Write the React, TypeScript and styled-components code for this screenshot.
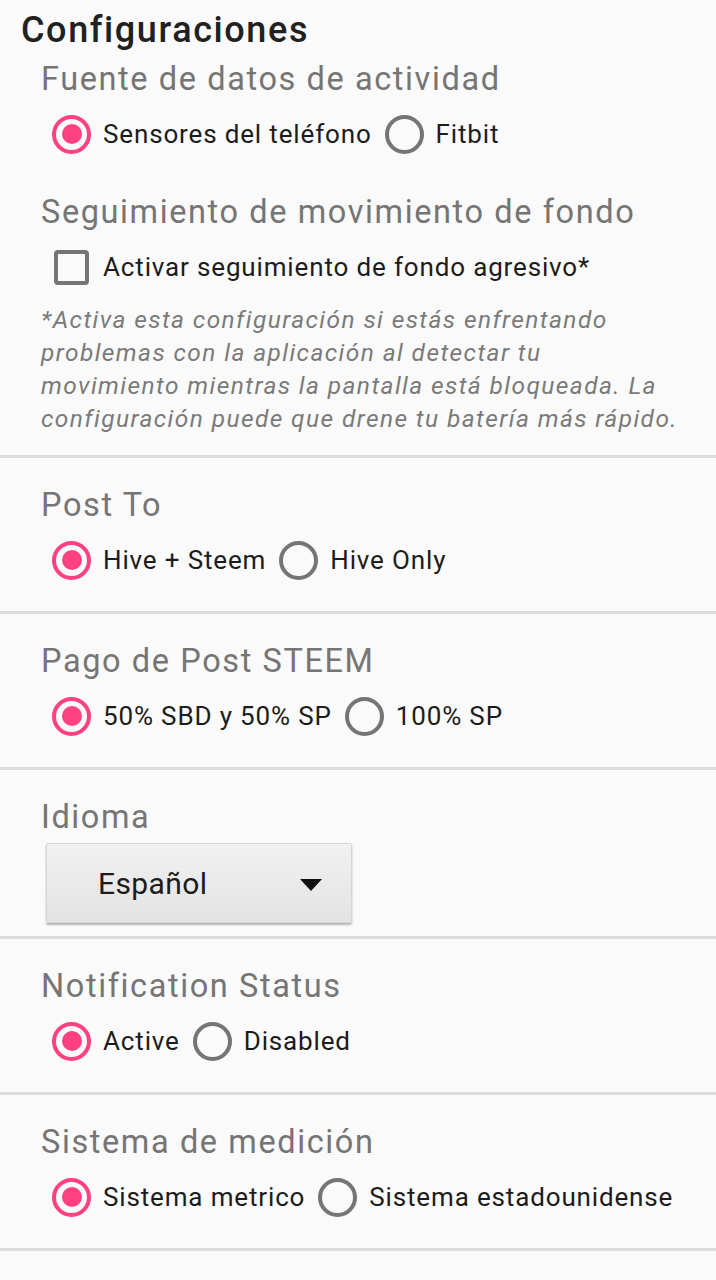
import React from "react";
import styled, { createGlobalStyle } from "styled-components";

const GlobalStyle = createGlobalStyle`
  html, body {
    margin: 0;
    padding: 0;
    background: #fafafa;
  }
  body {
    font-family: Roboto, "Noto Sans", "Liberation Sans", sans-serif;
    -webkit-font-smoothing: antialiased;
  }
`;

const Page = styled.div`
  width: 716px;
  min-height: 1280px;
  background: #fafafa;
  overflow: hidden;
`;

const Title = styled.h1`
  margin: 0;
  padding-left: 21px;
  height: 60px;
  line-height: 60px;
  font-size: 36px;
  font-weight: 500;
  letter-spacing: 1.6px;
  color: #212121;
`;

const Section = styled.section<{ $divider?: boolean; $bottom?: number }>`
  border-top: ${(p) => (p.$divider ? "3px solid #dcdcdc" : "none")};
  padding-bottom: ${(p) => p.$bottom ?? 15}px;
`;

const Header = styled.h2<{ $top?: number }>`
  margin: ${(p) => p.$top ?? 28}px 0 0 41px;
  height: 38px;
  line-height: 38px;
  font-size: 32.5px;
  font-weight: 400;
  letter-spacing: 1.6px;
  color: #757575;
  white-space: nowrap;
`;

const Row = styled.div<{ $h?: number }>`
  display: flex;
  align-items: center;
  gap: 13px;
  height: ${(p) => p.$h ?? 72}px;
  padding-left: 52px;
`;

const Option = styled.label`
  display: flex;
  align-items: center;
  gap: 12px;
  font-size: 26px;
  letter-spacing: 0.85px;
  color: #1c1c1c;
  white-space: nowrap;
`;

const RadioCircle = styled.span<{ $checked?: boolean }>`
  box-sizing: border-box;
  width: 39px;
  height: 39px;
  border-radius: 50%;
  border: 4.5px solid ${(p) => (p.$checked ? "#ff4081" : "#757575")};
  display: flex;
  align-items: center;
  justify-content: center;
  flex-shrink: 0;
  &::after {
    content: "";
    display: ${(p) => (p.$checked ? "block" : "none")};
    width: 20px;
    height: 20px;
    border-radius: 50%;
    background: #ff4081;
  }
`;

const CheckSlot = styled.span`
  width: 39px;
  height: 39px;
  display: flex;
  align-items: center;
  justify-content: center;
  flex-shrink: 0;
`;

const CheckBox = styled.span`
  box-sizing: border-box;
  width: 35px;
  height: 35px;
  border: 4px solid #757575;
  border-radius: 4px;
`;

const Note = styled.p`
  margin: 0 0 0 41px;
  padding-right: 30px;
  font-size: 24.5px;
  line-height: 33px;
  letter-spacing: 1.4px;
  font-style: italic;
  color: #7a7a7a;
`;

const Dropdown = styled.div`
  box-sizing: border-box;
  margin: 7px 0 0 46px;
  width: 306px;
  height: 80px;
  padding: 0 29px 0 51px;
  display: flex;
  align-items: center;
  justify-content: space-between;
  background: linear-gradient(#f1f1f1, #e3e3e3);
  border: 1px solid #d6d6d6;
  border-radius: 2px;
  box-shadow: 0 2px 2px rgba(0, 0, 0, 0.28);
  font-size: 30px;
  letter-spacing: 0.4px;
  color: #1c1c1c;
`;

const Caret = styled.span`
  width: 0;
  height: 0;
  border-left: 11.5px solid transparent;
  border-right: 11.5px solid transparent;
  border-top: 12px solid #111;
  margin-top: 4px;
`;

type Opt = { label: string; checked?: boolean };

const RadioGroup: React.FC<{ options: Opt[] }> = ({ options }) => (
  <Row>
    {options.map((o) => (
      <Option key={o.label}>
        <RadioCircle $checked={o.checked} />
        {o.label}
      </Option>
    ))}
  </Row>
);

export default function App() {
  return (
    <Page>
      <GlobalStyle />
      <Title>Configuraciones</Title>
      <Section $bottom={20}>
        <Header $top={0}>Fuente de datos de actividad</Header>
        <RadioGroup
          options={[
            { label: "Sensores del teléfono", checked: true },
            { label: "Fitbit" },
          ]}
        />
        <Header $top={23}>Seguimiento de movimiento de fondo</Header>
        <Row>
          <Option>
            <CheckSlot>
              <CheckBox />
            </CheckSlot>
            Activar seguimiento de fondo agresivo*
          </Option>
        </Row>
        <Note>
          *Activa esta configuración si estás enfrentando problemas con la
          aplicación al detectar tu movimiento mientras la pantalla está
          bloqueada. La configuración puede que drene tu batería más rápido.
        </Note>
      </Section>
      <Section $divider>
        <Header>Post To</Header>
        <RadioGroup
          options={[{ label: "Hive + Steem", checked: true }, { label: "Hive Only" }]}
        />
      </Section>
      <Section $divider>
        <Header>Pago de Post STEEM</Header>
        <RadioGroup
          options={[{ label: "50% SBD y 50% SP", checked: true }, { label: "100% SP" }]}
        />
      </Section>
      <Section $divider $bottom={13}>
        <Header>Idioma</Header>
        <Dropdown>
          <span>Español</span>
          <Caret />
        </Dropdown>
      </Section>
      <Section $divider>
        <Header>Notification Status</Header>
        <RadioGroup options={[{ label: "Active", checked: true }, { label: "Disabled" }]} />
      </Section>
      <Section $divider>
        <Header>Sistema de medición</Header>
        <RadioGroup
          options={[
            { label: "Sistema metrico", checked: true },
            { label: "Sistema estadounidense" },
          ]}
        />
      </Section>
      <Section $divider $bottom={40} />
    </Page>
  );
}
